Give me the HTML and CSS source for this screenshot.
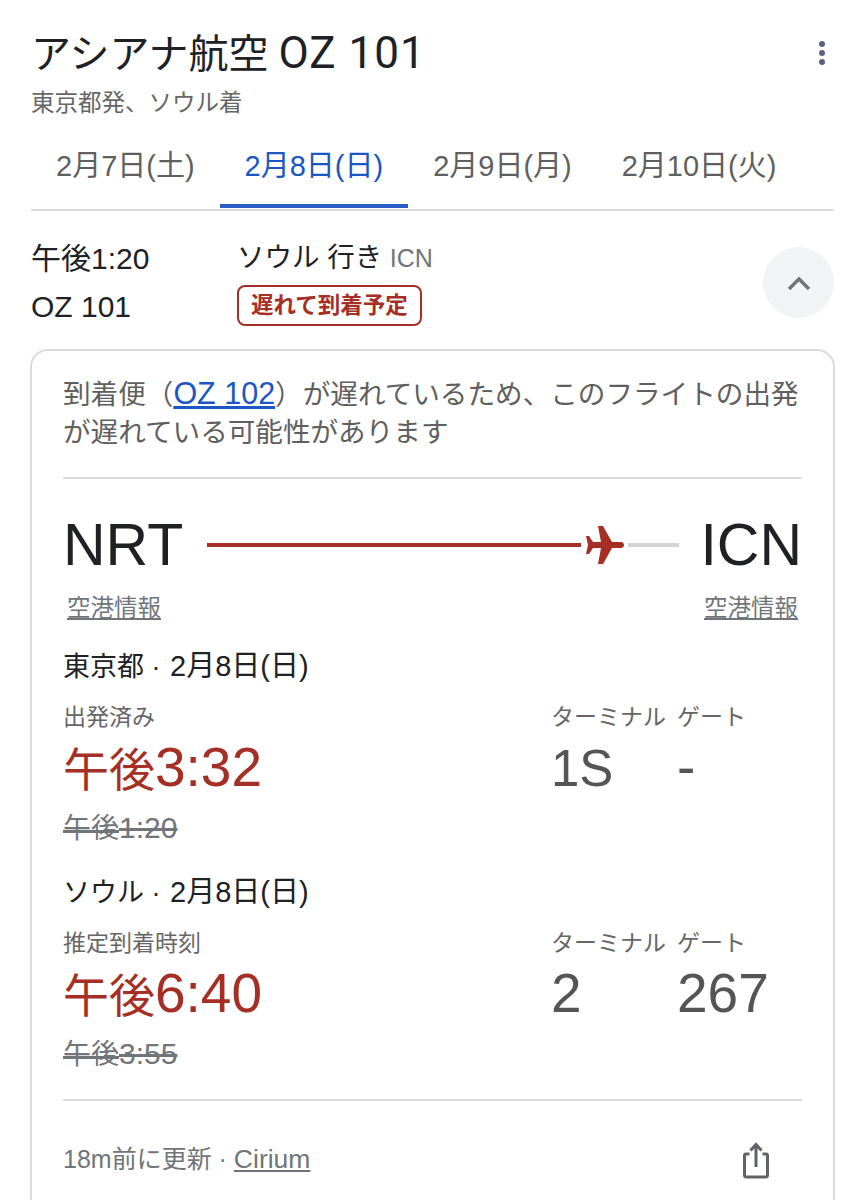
FILE: index.html
```html
<!DOCTYPE html>
<html lang="ja">
<head>
<meta charset="utf-8">
<title>アシアナ航空 OZ 101</title>
<link rel="stylesheet" href="styles.css">
</head>
<body>
<main class="page">
  <header class="head">
    <div>
      <h1 class="title">アシアナ航空 <span class="title-code">OZ 101</span></h1>
      <p class="subtitle">東京都発、ソウル着</p>
    </div>
    <svg class="more" width="8" height="26" viewBox="0 0 8 26"><circle cx="4" cy="4" r="3"/><circle cx="4" cy="13" r="3"/><circle cx="4" cy="22" r="3"/></svg>
  </header>
  <nav class="tabs">
    <span class="tab">2月7日(土)</span>
    <span class="tab active">2月8日(日)</span>
    <span class="tab">2月9日(月)</span>
    <span class="tab">2月10日(火)</span>
  </nav>
  <section class="summary">
    <div class="sum-time">
      <div class="sum-dep">午後1:20</div>
      <div>OZ 101</div>
    </div>
    <div class="sum-dest">
      <div class="dest">ソウル 行き <span class="code">ICN</span></div>
      <span class="badge">遅れて到着予定</span>
    </div>
    <div class="collapse">
      <svg width="26" height="16" viewBox="0 0 26 16"><path d="M3 14 L13 4 L23 14" fill="none" stroke="#70757a" stroke-width="3.4"/></svg>
    </div>
  </section>
  <section class="card">
    <p class="notice">到着便（<a class="link" href="#">OZ 102</a>）が遅れているため、このフライトの出発が遅れている可能性があります</p>
    <div class="route">
      <span class="iata">NRT</span>
      <div class="track">
        <span class="line done"></span>
        <svg class="plane" width="38" height="38" viewBox="0 0 38 38"><path d="M0 10 L3 10 L7 16 L15 16 L12 0 L17 0 L26 16 L35 16 C39 16 39 22 35 22 L26 22 L17 38 L12 38 L15 22 L7 22 L3 28 L0 28 L2 19 Z"/></svg>
        <span class="line rest"></span>
      </div>
      <span class="iata">ICN</span>
    </div>
    <div class="airports">
      <a class="ap" href="#">空港情報</a>
      <a class="ap" href="#">空港情報</a>
    </div>
    <div class="leg">
      <div class="leg-head">東京都 · <span class="leg-date">2月8日(日)</span></div>
      <div class="leg-grid">
        <div class="leg-main">
          <div class="label">出発済み</div>
          <div class="big red"><span class="big-ja">午後</span>3:32</div>
          <div class="old"><span class="old-ja">午後</span>1:20</div>
        </div>
        <div class="leg-col term">
          <div class="label">ターミナル</div>
          <div class="big"><span class="big-narrow">1S</span></div>
        </div>
        <div class="leg-col">
          <div class="label">ゲート</div>
          <div class="big">-</div>
        </div>
      </div>
    </div>
    <div class="leg second">
      <div class="leg-head">ソウル · <span class="leg-date">2月8日(日)</span></div>
      <div class="leg-grid">
        <div class="leg-main">
          <div class="label">推定到着時刻</div>
          <div class="big red"><span class="big-ja">午後</span>6:40</div>
          <div class="old"><span class="old-ja">午後</span>3:55</div>
        </div>
        <div class="leg-col term">
          <div class="label">ターミナル</div>
          <div class="big">2</div>
        </div>
        <div class="leg-col">
          <div class="label">ゲート</div>
          <div class="big">267</div>
        </div>
      </div>
    </div>
    <footer class="foot">
      <span>18m前に更新 · <a class="ap cirium" href="#">Cirium</a></span>
      <svg class="share" width="28" height="37" viewBox="0 0 28 37"><path d="M8.500 12 H5 Q3.500 12 3.500 13.500 V33 Q3.500 35 5.500 35 H24.500 Q26.500 35 26.500 33 V13.500 Q26.500 12 25 12 H21.500 M15 25 V3 M9.500 8.500 L15 2.500 L20.500 8.500" fill="none" stroke="#5f6368" stroke-width="3"/></svg>
    </footer>
  </section>
</main>
</body>
</html>
```
FILE: styles.css
```css
* { box-sizing: border-box; }
html, body { margin: 0; padding: 0; background: #fff; }
body {
  height: 1200px;
  overflow: hidden;
  font-family: "Liberation Sans", "Noto Sans CJK JP", sans-serif;
  color: #202124;
}
a { color: inherit; }
.page { padding: 29px 15px 0 31px; }
.head { display: flex; justify-content: space-between; align-items: flex-start; }
.title {
  margin: 0;
  font-family: Roboto, "Noto Sans CJK JP", sans-serif;
  font-weight: 400;
  font-size: 40px;
  line-height: 52px;
  height: 52px;
}
.title-code { font-size: 44px; line-height: 1; letter-spacing: 1px; }
.subtitle { margin: 6px 0 0; font-size: 23.500px; line-height: 32px; color: #666; font-weight: 400; }
.more { margin: 11px 8px 0 0; fill: #5b6180; }
.tabs {
  display: flex;
  margin-top: 20px;
  border-bottom: 2px solid #dadce0;
  height: 72px;
}
.tab {
  padding: 0 25px;
  font-size: 29px;
  line-height: 54px;
  color: #5f5f5f;
  height: 69px;
}
.active { color: #1a56c4; border-bottom: 4px solid #2a5dc6; }
.summary {
  display: flex;
  margin-top: 22px;
  align-items: flex-start;
}
.sum-time { width: 206px; font-size: 30px; line-height: 49px; color: #202124; }
.sum-dep { padding-top: 1px; margin-bottom: -1px; }
.dest { font-size: 27.500px; line-height: 49px; }
.code { font-size: 25px; color: #70757a; }
.badge {
  display: inline-block;
  margin-top: 2px;
  height: 41px;
  padding: 0 12px;
  border: 2px solid #a52f25;
  border-radius: 8px;
  color: #a52f25;
  font-size: 22.500px;
  line-height: 37px;
  font-weight: 700;
}
.collapse {
  margin: 14px 0 0 auto;
  width: 71px;
  height: 71px;
  border-radius: 50%;
  background: #f1f3f4;
  display: flex;
  align-items: center;
  justify-content: center;
}
.card {
  margin: 18px -1px 0 -1px;
  height: 900px;
  border: 2px solid #dadce0;
  border-radius: 18px;
  padding: 23px 31px 0;
}
.notice { margin: 0; font-size: 27.600px; line-height: 38px; color: #5f5f5f; padding-bottom: 25px; border-bottom: 2px solid #dadce0; }
.link { color: #1a56c4; text-decoration: underline; font-size: 30.500px; }
.route { display: flex; align-items: center; margin-top: 28px; height: 76px; }
.iata { font-size: 59px; line-height: 76px; color: #202124; }
.track { flex: 1; display: flex; align-items: center; margin: 0 21px 0 24px; }
.line { height: 4px; display: block; }
.done { flex: 1; background: #a52f25; }
.rest { width: 51px; background: #d4d4d4; margin-left: 4px; }
.plane { fill: #a52f25; margin-left: 5px; }
.airports { display: flex; justify-content: space-between; padding: 0 4px; margin-top: 7px; }
.ap { font-size: 23.500px; line-height: 36px; color: #70757a; text-decoration: underline; }
.leg { margin-top: 23px; }
.second { margin-top: 23px; }
.leg-head { font-size: 27px; line-height: 34px; color: #202124; }
.leg-date { font-size: 29px; margin-left: 2px; }
.leg-grid { display: flex; margin-top: 18px; }
.leg-main { width: 488px; }
.term { width: 126px; }
.label { font-size: 23px; line-height: 30px; color: #666; margin-bottom: 3px; }
.big { font-size: 55px; line-height: 64px; color: #555; }
.big-ja { font-size: 46px; }
.big-narrow { font-size: 51px; }
.red { color: #a52f25; }
.old { font-size: 30px; line-height: 46px; margin-top: 3px; color: #70757a; text-decoration: line-through; }
.old-ja { font-size: 28px; }
.foot {
  margin-top: 21px;
  padding-top: 34px;
  border-top: 2px solid #dadce0;
  display: flex;
  justify-content: space-between;
  align-items: flex-start;
  font-size: 25px;
  line-height: 48px;
  color: #70757a;
}
.cirium { font-size: 26.500px; }
.share { margin: 7px 33px 0 0; }
```
